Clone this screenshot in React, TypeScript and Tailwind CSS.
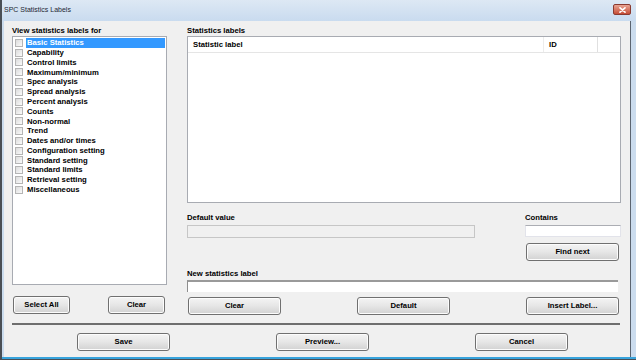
import React from 'react';

const CATEGORIES = [
  'Basic Statistics',
  'Capability',
  'Control limits',
  'Maximum/minimum',
  'Spec analysis',
  'Spread analysis',
  'Percent analysis',
  'Counts',
  'Non-normal',
  'Trend',
  'Dates and/or times',
  'Configuration setting',
  'Standard setting',
  'Standard limits',
  'Retrieval setting',
  'Miscellaneous',
];

const font = { fontFamily: '"Liberation Sans", Arial, sans-serif' };

const Button: React.FC<{ label: string; className?: string }> = ({ label, className = '' }) => (
  <button
    className={`h-[18px] rounded-[3px] border border-[#707070] bg-gradient-to-b from-[#f4f4f4] via-[#e6e6e6] to-[#d2d2d2] text-[7.7px] font-bold text-black leading-none shadow-[inset_0_0_0_1px_#fcfcfc] ${className}`}
  >
    {label}
  </button>
);

const Label: React.FC<{ text: string }> = ({ text }) => (
  <div className="h-[11px] text-[7.7px] font-bold leading-[11px] text-black">{text}</div>
);

const CategoryList: React.FC = () => (
  <div className="h-[249px] border border-[#a8abb2] bg-white pt-[1px] pl-[1px] pr-[1px]">
    {CATEGORIES.map((name, i) => (
      <div key={name} className="flex h-[9.8px] items-center">
        <span className="ml-[1px] h-[8px] w-[8px] border border-[#b5b5b5] bg-gradient-to-br from-[#dcdcdc] to-[#fafafa]" />
        <span
          className={`ml-[3px] flex h-full flex-1 items-center pl-[1px] text-[7.7px] font-bold ${
            i === 0 ? 'bg-[#3399ff] text-white' : 'text-black'
          }`}
        >
          {name}
        </span>
      </div>
    ))}
  </div>
);

const LabelsTable: React.FC = () => (
  <div className="h-[167px] border border-[#a8abb2] bg-white">
    <div className="flex h-[16px] items-center border-b border-[#e5e5e5] text-[7.7px] font-bold">
      <div className="w-[356px] border-r border-[#ececec] pl-[5px] leading-[15px]">Statistic label</div>
      <div className="w-[54px] border-r border-[#e0e0e0] pl-[5px] leading-[15px]">ID</div>
    </div>
  </div>
);

export default function App() {
  return (
    <div className="h-[360px] w-[636px] overflow-hidden bg-[#cbdcee]" style={font}>
      <div className="flex h-full flex-col border-l-2 border-[#4a4f55] border-b-[1px]">
        {/* Title bar */}
        <div className="relative flex h-[21px] items-center bg-gradient-to-b from-[#dde8f4] to-[#c9dbef] pl-[2px]">
          <span className="text-[7px] text-[#1e2733]">SPC Statistics Labels</span>
          <div className="absolute right-[5px] top-[4px] flex h-[11px] w-[18px] items-center justify-center rounded-[2px] border border-[#8a3a30] bg-gradient-to-b from-[#e8a493] to-[#c54b35]">
            <svg width="7" height="6" viewBox="0 0 7 6">
              <path d="M1 0.8 L6 5.2 M6 0.8 L1 5.2" stroke="#fff" strokeWidth="1.6" strokeLinecap="round" />
            </svg>
          </div>
        </div>

        {/* Client area */}
        <div className="ml-[2px] mr-[5px] flex flex-1 flex-col border-r border-[#5b6470] bg-[#f0f0f0] pl-[8px] pt-[4px]">
          <div className="flex gap-[20px]">
            {/* Left column */}
            <div className="flex w-[155px] flex-col">
              <Label text="View statistics labels for" />
              <CategoryList />
              <div className="mt-[11px] flex justify-between pl-[1px] pr-[2px]">
                <Button label="Select All" className="w-[57px]" />
                <Button label="Clear" className="w-[57px]" />
              </div>
            </div>

            {/* Right column */}
            <div className="flex w-[434px] flex-col">
              <Label text="Statistics labels" />
              <LabelsTable />

              <div className="mt-[9px] flex justify-between">
                <div className="flex w-[288px] flex-col">
                  <Label text="Default value" />
                  <div className="mt-[2px] h-[13px] border border-[#c6c6c6] bg-[#f0f0f0]" />
                </div>
                <div className="flex w-[96px] flex-col">
                  <Label text="Contains" />
                  <div className="mt-[2px] h-[12px] border border-[#e2e3ea] border-t-[#abadb3] bg-white" />
                  <Button label="Find next" className="ml-[1px] mt-[6px] w-[93px]" />
                </div>
              </div>

              <div className="mt-[7px]">
                <Label text="New statistics label" />
              </div>
              <div className="mt-[1px] h-[12px] w-[431px] border-t-2 border-l border-[#8e8e8e] border-t-[#9a9a9a] bg-white" />

              <div className="mt-[5px] flex justify-between pl-[1px] pr-[2px]">
                <Button label="Clear" className="w-[93px]" />
                <Button label="Default" className="w-[93px]" />
                <Button label="Insert Label..." className="w-[93px]" />
              </div>
            </div>
          </div>

          <div className="mt-[8px] mr-[10px] h-[2px] bg-[#6e6e6e]" />

          <div className="mt-[8px] flex gap-[106px] pl-[65px]">
            <Button label="Save" className="w-[93px]" />
            <Button label="Preview..." className="w-[93px]" />
            <Button label="Cancel" className="w-[93px]" />
          </div>
        </div>
        <div className="h-[2px] bg-[#37a3dc]" />
      </div>
    </div>
  );
}
